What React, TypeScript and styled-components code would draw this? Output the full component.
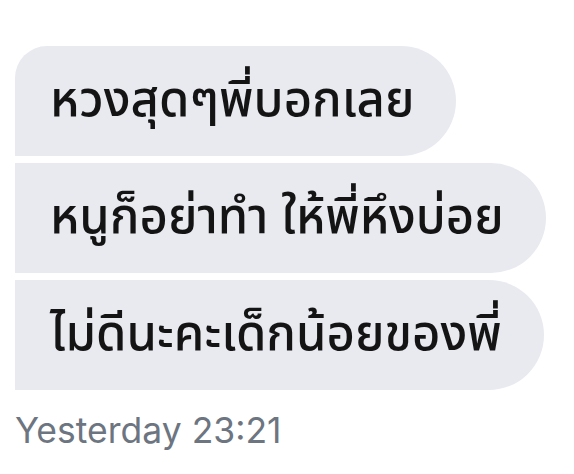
import React from "react";
import styled, { createGlobalStyle } from "styled-components";

const Global = createGlobalStyle`
  html, body { margin: 0; padding: 0; background: #ffffff; }
  body { width: 574px; height: 474px; overflow: hidden; }
`;

const Thread = styled.div`
  display: flex;
  flex-direction: column;
  align-items: flex-start;
  gap: 7px;
  padding: 46px 0 0 15px;
  font-family: "Noto Sans Thai", "Noto Sans", "Loma", "Garuda", "Norasi", sans-serif;
`;

const Bubble = styled.div<{ $first?: boolean }>`
  height: 110px;
  box-sizing: border-box;
  display: flex;
  align-items: center;
  padding: 0 42px 0 35px;
  background: #e9eaf0;
  color: #141414;
  font-size: 49px;
  font-weight: 500;
  border-radius: ${(p) => (p.$first ? "32px 55px 55px 0" : "0 55px 55px 0")};
  white-space: nowrap;
`;

const Stamp = styled.div`
  margin-top: 16px;
  font-family: Inter, "Liberation Sans", sans-serif;
  font-size: 35.5px;
  color: #6c7580;
  line-height: 1;
`;

export default function App() {
  return (
    <>
      <Global />
      <Thread>
        <Bubble $first>หวงสุดๆพี่บอกเลย</Bubble>
        <Bubble>หนูก็อย่าทำ ให้พี่หึงบ่อย</Bubble>
        <Bubble>ไม่ดีนะคะเด็กน้อยของพี่</Bubble>
        <Stamp>Yesterday 23:21</Stamp>
      </Thread>
    </>
  );
}
